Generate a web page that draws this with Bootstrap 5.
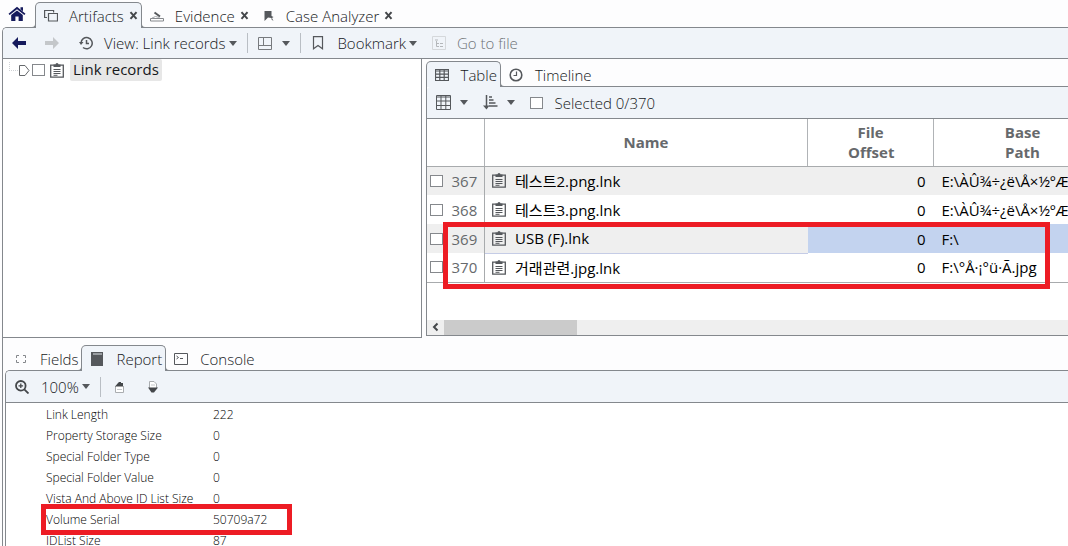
<!DOCTYPE html>
<html lang="en">
<head>
<meta charset="utf-8">
<meta name="viewport" content="width=device-width, initial-scale=1">
<title>Artifacts - Link records</title>
<link href="https://cdn.jsdelivr.net/npm/bootstrap@5.3.0/dist/css/bootstrap.min.css" rel="stylesheet">
<style>
:root { --edge:#84888d; --bar:#f0f4f9; --ink:#16181b; --glyph:#55585c; --hint:#ed1c24; }
body { font:300 15px/20px "Open Sans","Noto Sans CJK KR",sans-serif; color:var(--ink); background:#fdfdfe; height:100vh; overflow:hidden; }
button { font:inherit; color:inherit; background:none; border:0; padding:0; white-space:nowrap; display:inline-flex; align-items:center; }
button:disabled { color:#6e7276; }
svg { display:block; flex:none; }
.ico { width:14px; height:14px; color:var(--glyph); }
.clip-ico { width:14px; height:15px; color:var(--glyph); }

/* tabs */
.tabbar { position:relative; z-index:1; }
.top-tabs { padding-top:2px; }
.home-btn { padding:0 9px 2px 8px; }
.tab-item { display:flex; align-items:center; height:26px; position:relative; border:1px solid transparent; border-bottom:0; padding:0 3px 0 8px; margin-right:-1px; }
.tab-item button:first-child { gap:11px; }
.tab-item.on { background:var(--bar); border-color:var(--edge); border-radius:5px 5px 0 0; }
.tab-item.on::before, .tab-item.on::after { content:""; position:absolute; bottom:0; width:4px; height:4px; border-bottom:1px solid var(--edge); }
.tab-item.on::before { left:-4px; border-right:1px solid var(--edge); border-bottom-right-radius:4px; }
.tab-item.on::after { right:-4px; border-left:1px solid var(--edge); border-bottom-left-radius:4px; }
.sub .tab-item button { gap:12px; }
.tab-item.first-tab::before { display:none; }
.closer { margin-left:5px; width:9px; }

/* frames and toolbars */
.frame { border:1px solid var(--edge); border-right:0; border-bottom:0; border-top-left-radius:5px; margin-top:-1px; min-height:0; }
.outer { margin-left:2px; }
.toolstrip { background:var(--bar); height:31px; border-bottom:1px solid var(--edge); border-top-left-radius:4px; padding-left:9px; white-space:nowrap; }
.grid-tools, .zoom-tools { height:32px; }
.rule { width:1px; height:20px; background:#b9bec4; margin:0 10px; }
.caret { width:0; height:0; border:4px solid transparent; border-top:5px solid var(--glyph); border-bottom:0; }
.tick { appearance:none; width:13px; height:12px; border:1px solid #85888c; background:#fff; margin:0; display:block; flex:none; }
.fwd { margin-left:19px; }
.view-btn { margin-left:20px; }
.view-btn span { margin:0 4px 0 11px; }
.lay-btn .caret { margin-left:10px; }
.mark-btn span { margin:0 3px 0 12px; }
.goto { margin-left:15px; gap:11px; }

/* tree */
.work { height:279px; }
.treepane { flex:0 0 39.3%; border-right:1px solid var(--edge); border-bottom:1px solid var(--edge); background:#fff; padding-left:6px; }
.tree-row { height:22px; }
.stub { width:9px; height:9px; border:1px dotted #cfd2d5; border-width:0 0 1px 1px; margin-top:-8px; }
.twist { margin:0 2px 0 1px; }
.tree-clip { margin:0 6px 0 5px; }
.picked { background:#e7e7e7; padding:0 3px; border-radius:2px; font-weight:400; height:22px; line-height:21px; }

/* records */
.gridpane { min-width:0; margin:2px 0 1px 4px; }
.gridpane .frame { border-bottom:1px solid var(--edge); border-top-left-radius:0; background:#fff; }
.grid-tools .caret { margin:0 15px 0 9px; }
.grid-tools label { margin-left:12px; }
.records { table-layout:fixed; width:685px; font-weight:400; border-bottom:1px solid #a8abad; background:#fff; color:#000; }
.records th { color:#66696c; font-weight:700; text-align:center; height:47px; border-bottom:1px solid #a8abad; border-right:1px solid #b0b3b6; padding:0 40px; vertical-align:middle; }
.records th:last-child { padding:0 60px; }
.records td { height:29px; padding:0 8px; white-space:nowrap; vertical-align:middle; }
.records td:first-child { padding:0 0 0 3px; color:#66696c; border-right:1px solid #a8abad; }
.records .shade td { background:#efefef; }
.records .shade .hot { background:#c3d3ef; }
.records .focusrow .cellname { border-bottom:1px solid #c5cce6; }
.records .cellname { padding-left:7px; }
.rowhead { display:flex; align-items:center; gap:9px; }
.callout { position:absolute; border:5px solid var(--hint); pointer-events:none; }
.callout-rows { left:16px; top:103px; width:607px; height:67px; }
.callout-serial { left:-5px; top:-5px; width:251px; height:31px; }
.scroller { margin-top:37px; height:15px; background:#efefef; }
.scroller span { width:133px; background:#cbcbcb; }

/* report */
.lower { padding:7px 0 0 2px; }
.zoom-tools span:not(.rule) { margin:0 3px 0 12px; }
.page-btn { margin:0 18px 0 3px; }
.report { font-size:12px; line-height:21px; background:#fff; padding:1px 0 0 40px; color:#000; }
.report dl { margin:0; }
.report dt { font-weight:inherit; width:167px; }
.report dd { margin:0; }
</style>
<script src="https://cdn.jsdelivr.net/npm/bootstrap@5.3.0/dist/js/bootstrap.bundle.min.js"></script>
</head>
<body class="d-flex flex-column">
<svg class="d-none">
  <symbol id="clip" viewBox="0 0 14 15"><path d="M.7 2.200h12.600v12H.7z" fill="none" stroke="currentColor" stroke-width="1.300"/><path d="M3.500 1.500h2a1.500 1.500 0 0 1 3 0h2V4h-7z" fill="currentColor"/><path d="M3.500 6.500h7M3.500 8.500h7M3.500 10.500h7M3.500 12.300h4" stroke="currentColor"/></symbol>
  <symbol id="cross" viewBox="0 0 9 9"><path d="M1.500 1.200l6 6.600M7.500 1.200l-6 6.600" stroke="#44474a" stroke-width="2"/></symbol>
  <symbol id="cells" viewBox="0 0 14 14"><path d="M.5 1.500h13v11H.5zM.5 3h13M.5 6.200h13M.5 9.300h13M4.800 1v12M9.200 1v12" fill="none" stroke="currentColor" stroke-width="1.200"/></symbol>
</svg>

<nav class="tabbar top-tabs d-flex align-items-end" aria-label="Views">
  <button class="home-btn align-self-center" aria-label="Home"><svg width="18" height="16" viewBox="0 0 18 16" fill="#151a5c"><path d="M9 .8l8.500 7-1.200 1.300L9 3.200 1.700 9.100.5 7.800zM12.500 1.200h2.500v4l-2.500-2zM3.200 9L9 4.500 14.800 9v6H10.600v-4.500H7.400V15H3.200z"/></svg></button>
  <div class="tab-item on"><button><svg class="ico" viewBox="0 0 14 14" fill="none" stroke="currentColor" stroke-width="1.200"><path d="M3 8.500H.6V1.500h9v2M4.500 4.500h9V12h-9z"/></svg>Artifacts</button><button class="closer" aria-label="Close Artifacts"><svg width="9" height="9"><use href="#cross"/></svg></button></div>
  <div class="tab-item"><button><svg class="ico" viewBox="0 0 14 14" fill="none" stroke="currentColor"><path d="M.5 9.500h13v2.500H.5z" stroke="#85888c"/><path d="M2 9l3.500-1.500 4 1" stroke="#a5a8ac"/><path d="M4.500 3.500l5.500 4" stroke-width="2"/></svg>Evidence</button><button class="closer" aria-label="Close Evidence"><svg width="9" height="9"><use href="#cross"/></svg></button></div>
  <div class="tab-item"><button><svg class="ico" viewBox="0 0 14 14" fill="currentColor"><path d="M3.500 2h7v5l2 1-1.500 1 1.500 3-2-1.500V9L7 8.500 3.500 12z"/></svg>Case Analyzer</button><button class="closer" aria-label="Close Case Analyzer"><svg width="9" height="9"><use href="#cross"/></svg></button></div>
</nav>

<main class="frame outer d-flex flex-column flex-grow-1">
  <div class="toolstrip d-flex align-items-center flex-shrink-0">
    <button aria-label="Back"><svg width="14" height="14" viewBox="0 0 14 14" fill="#151a5c"><path d="M0 7l6-6v4h8v4H6v4z"/></svg></button>
    <button class="fwd" aria-label="Forward" disabled><svg width="14" height="14" viewBox="0 0 14 14" fill="#c4c7ca"><path d="M14 7L8 1v4H0v4h8v4z"/></svg></button>
    <button class="view-btn"><svg class="ico" viewBox="0 0 14 14" fill="none" stroke="currentColor" stroke-width="1.500"><path d="M2 7a5.600 5.600 0 1 1 2 4.500M7.500 4v3.500H10"/><path d="M0 6h4.500L2 9z" fill="currentColor" stroke="none"/></svg><span>View: Link records</span><i class="caret"></i></button>
    <span class="rule"></span>
    <button class="lay-btn" aria-label="Layout"><svg class="ico" viewBox="0 0 14 14" fill="none" stroke="#777a7e"><path d="M.5 1.500h13v12H.5zM.5 9.500h13M5.500 1.500v8"/></svg><i class="caret"></i></button>
    <span class="rule"></span>
    <button class="mark-btn"><svg class="ico" viewBox="0 0 14 14" fill="none" stroke="currentColor" stroke-width="1.200"><path d="M2.500.6h9v12.200L7 9.500l-4.500 3.300z"/></svg><span>Bookmark</span><i class="caret"></i></button>
    <button class="goto" disabled><svg width="14" height="14" viewBox="0 0 14 14" fill="none" stroke="#d5d8db"><path d="M.5.5h13v13H.5z"/><path d="M3 4h3M4.500 5v5.500H7M5 7.500h2M8 7.500h3M8 10.500h3" stroke="#b4b7ba"/></svg>Go to file</button>
  </div>

  <div class="work d-flex flex-shrink-0">
    <section class="treepane" aria-label="Tree">
      <div class="tree-row d-flex align-items-center">
        <span class="stub"></span>
        <svg class="twist" width="11" height="11" viewBox="0 0 11 11" fill="none" stroke="#66696c"><path d="M.5.5H6l4 5-4 5H.5z"/></svg>
        <input class="tick" type="checkbox" aria-label="Link records">
        <svg class="clip-ico tree-clip"><use href="#clip"/></svg>
        <span class="picked">Link records</span>
      </div>
    </section>

    <section class="gridpane flex-grow-1">
      <nav class="tabbar sub d-flex" aria-label="Results">
        <div class="tab-item on first-tab"><button><svg class="ico" viewBox="0 0 14 14"><use href="#cells"/></svg>Table</button></div>
        <div class="tab-item"><button><svg class="ico" viewBox="0 0 14 14" fill="none" stroke="currentColor" stroke-width="1.600"><circle cx="7" cy="7" r="5.800"/><path d="M7.500 3.500v4H4.500" stroke-width="1.200"/></svg>Timeline</button></div>
      </nav>
      <div class="frame overflow-hidden">
        <div class="toolstrip grid-tools d-flex align-items-center">
          <button aria-label="Columns"><svg width="15" height="15" viewBox="0 0 15 15" fill="none" stroke="#55585c"><path d="M.5.5h14v14H.5zM.5 2h14M.5 6h14M.5 10.500h14M5 .5v14M9.800.5v14"/></svg><i class="caret"></i></button>
          <button aria-label="Sort"><svg width="15" height="15" viewBox="0 0 15 15" stroke="#55585c"><path d="M3.500 0v11" stroke-width="1.500"/><path d="M0 10.500h6.500L3.500 14.500z" fill="#55585c" stroke="none"/><path d="M6 2h3M6 5h4.500M6 8h6.500M6 11h8.500" stroke-width="1.700"/></svg><i class="caret"></i></button>
          <input class="tick" type="checkbox" id="all"><label for="all">Selected 0/370</label>
        </div>
        <div class="position-relative">
          <table class="records">
            <colgroup><col style="width:58px"><col style="width:323px"><col style="width:126px"><col style="width:178px"></colgroup>
            <thead><tr><th></th><th>Name</th><th>File Offset</th><th>Base Path</th></tr></thead>
            <tbody>
              <tr class="shade"><td><div class="rowhead"><input class="tick" type="checkbox" aria-label="367">367</div></td><td class="cellname"><div class="rowhead"><svg class="clip-ico"><use href="#clip"/></svg>테스트2.png.lnk</div></td><td class="text-end">0</td><td>E:\ÀÛ¾÷¿ë\Å×½ºÆ®</td></tr>
              <tr><td><div class="rowhead"><input class="tick" type="checkbox" aria-label="368">368</div></td><td class="cellname"><div class="rowhead"><svg class="clip-ico"><use href="#clip"/></svg>테스트3.png.lnk</div></td><td class="text-end">0</td><td>E:\ÀÛ¾÷¿ë\Å×½ºÆ®</td></tr>
              <tr class="shade focusrow"><td><div class="rowhead"><input class="tick" type="checkbox" aria-label="369">369</div></td><td class="cellname"><div class="rowhead"><svg class="clip-ico"><use href="#clip"/></svg>USB (F).lnk</div></td><td class="text-end hot">0</td><td class="hot">F:\</td></tr>
              <tr><td><div class="rowhead"><input class="tick" type="checkbox" aria-label="370">370</div></td><td class="cellname"><div class="rowhead"><svg class="clip-ico"><use href="#clip"/></svg>거래관련.jpg.lnk</div></td><td class="text-end">0</td><td>F:\°Å·¡°ü·Ã.jpg</td></tr>
            </tbody>
          </table>
          <div class="callout callout-rows"></div>
        </div>
        <div class="scroller d-flex"><button class="px-1" aria-label="Scroll left"><svg width="9" height="10" viewBox="0 0 9 10" fill="none" stroke="#44474a" stroke-width="2"><path d="M6.500 1.500L3 5l3.500 3.500"/></svg></button><span></span></div>
      </div>
    </section>
  </div>

  <section class="lower d-flex flex-column flex-grow-1 overflow-hidden">
    <nav class="tabbar sub d-flex" aria-label="Details">
      <div class="tab-item"><button><svg class="ico" viewBox="0 0 14 14" fill="none" stroke="#85888c"><path d="M5 3.500H2.500V6M9 3.500h2.500V6M5 10.500H2.500V8M9 10.500h2.500V8"/></svg>Fields</button></div>
      <div class="tab-item on"><button><svg class="ico" viewBox="0 0 14 14" fill="currentColor"><path d="M1 0h12v14H1z"/><path d="M3 2h9" stroke="#dfe3e7"/></svg>Report</button></div>
      <div class="tab-item"><button><svg class="ico" viewBox="0 0 14 14" fill="none" stroke="currentColor"><path d="M.5 1.500h13v11H.5zM2.500 4l2 1.500-2 1.500M6 6.500h3"/></svg>Console</button></div>
    </nav>
    <div class="frame flex-grow-1">
      <div class="toolstrip zoom-tools d-flex align-items-center">
        <button><svg width="14" height="14" viewBox="0 0 14 14" fill="none" stroke="#44474a" stroke-width="1.800"><circle cx="5.800" cy="5.800" r="4.800"/><path d="M9.300 9.300l4.200 4.200"/><path d="M3.500 5.800h4.600M5.800 3.500v4.600" stroke-width="1.300"/></svg><span>100%</span><i class="caret"></i></button>
        <span class="rule"></span>
        <button class="page-btn" aria-label="Previous page"><svg width="12" height="12" viewBox="0 0 12 12"><path d="M1.500 5v6.500h8V5" fill="#fff" stroke="#aaadb0"/><path d="M3 8.500h5" stroke="#c4c7ca"/><path d="M1 5.500L4 2l1-1h2v1h2v3.500z" fill="#44474a"/></svg></button>
        <button class="page-btn" aria-label="Next page"><svg width="12" height="12" viewBox="0 0 12 12"><path d="M2.500 7V.5H7L9.500 3v4" fill="#fff" stroke="#aaadb0"/><path d="M4 4h4" stroke="#c4c7ca"/><path d="M1 6.500h10L7 11.500H4.500z" fill="#44474a"/></svg></button>
      </div>
      <div class="report">
        <dl class="d-flex"><dt>Link Length</dt><dd>222</dd></dl>
        <dl class="d-flex"><dt>Property Storage Size</dt><dd>0</dd></dl>
        <dl class="d-flex"><dt>Special Folder Type</dt><dd>0</dd></dl>
        <dl class="d-flex"><dt>Special Folder Value</dt><dd>0</dd></dl>
        <dl class="d-flex"><dt>Vista And Above ID List Size</dt><dd>0</dd></dl>
        <dl class="d-flex position-relative"><dt>Volume Serial</dt><dd>50709a72</dd><dd class="callout callout-serial"></dd></dl>
        <dl class="d-flex"><dt>IDList Size</dt><dd>87</dd></dl>
      </div>
    </div>
  </section>
</main>
</body>
</html>
